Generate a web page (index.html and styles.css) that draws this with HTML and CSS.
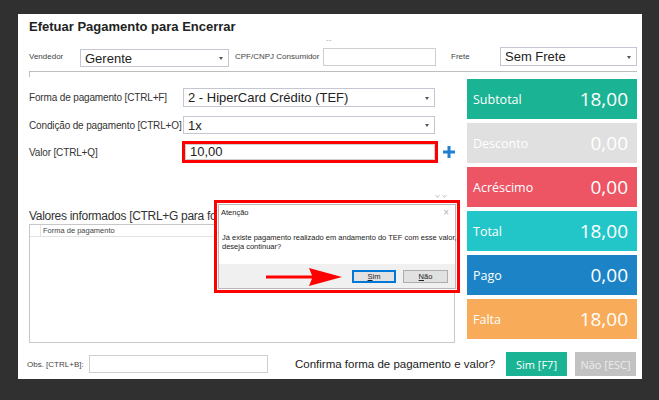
FILE: index.html
```html
<!DOCTYPE html>
<html lang="pt-BR">
<head>
    <meta charset="UTF-8">
    <meta name="viewport" content="width=device-width, initial-scale=1.0">
    <title>Efetuar Pagamento para Encerrar</title>
    <link rel="stylesheet" href="styles.css">
</head>
<body>
    <div class="window">
        <h1 class="title">Efetuar Pagamento para Encerrar</h1>

        <div class="top-row">
            <span class="lbl-sm lbl-vendedor">Vendedor</span>
            <div class="select sel-vendedor">Gerente<span class="caret"></span></div>
            <span class="lbl-sm lbl-cpf">CPF/CNPJ Consumidor</span>
            <div class="cpf-wrap">
                <span class="dashes">--</span>
                <div class="input input-cpf"></div>
            </div>
            <span class="lbl-sm lbl-frete">Frete</span>
            <div class="select sel-frete">Sem Frete<span class="caret"></span></div>
        </div>

        <div class="divider"></div>

        <div class="main">
            <div class="left">
                <div class="form-row r1">
                    <label>Forma de pagamento [CTRL+F]</label>
                    <div class="select sel-wide">2 - HiperCard Crédito (TEF)<span class="caret"></span></div>
                </div>
                <div class="form-row r2">
                    <label>Condição de pagamento [CTRL+O]</label>
                    <div class="select sel-wide">1x<span class="caret"></span></div>
                </div>
                <div class="form-row r3">
                    <label>Valor [CTRL+Q]</label>
                    <div class="input input-valor">10,00</div>
                    <svg class="plus" width="12" height="12" viewBox="0 0 12 12">
                        <path d="M4.5 0h3v4.5H12v3H7.5V12h-3V7.5H0v-3h4.5z" fill="#1f7fd1"/>
                    </svg>
                </div>

                <div class="chevrons">
                    <svg width="12" height="5" viewBox="0 0 12 5">
                        <path d="M0.5 1l2 2.5 2-2.5M7.5 1l2 2.5 2-2.5" fill="none" stroke="#c4c4c4" stroke-width="1"/>
                    </svg>
                </div>
                <!-- the dialog covers the end of this heading -->
                <h2 class="valores">Valores informados [CTRL+G para focar]</h2>
                <div class="table">
                    <div class="thead">
                        <div class="th-first"></div>
                        <div class="th">Forma de pagamento</div>
                    </div>
                </div>
            </div>

            <div class="cards">
                <div class="card subtotal"><span>Subtotal</span><span class="val">18,00</span></div>
                <div class="card desconto"><span>Desconto</span><span class="val">0,00</span></div>
                <div class="card acrescimo"><span>Acréscimo</span><span class="val">0,00</span></div>
                <div class="card total"><span>Total</span><span class="val">18,00</span></div>
                <div class="card pago"><span>Pago</span><span class="val">0,00</span></div>
                <div class="card falta"><span>Falta</span><span class="val">18,00</span></div>
            </div>
        </div>

        <div class="bottom">
            <span class="lbl-sm lbl-obs">Obs. [CTRL+B]:</span>
            <div class="input input-obs"></div>
            <span class="confirm">Confirma forma de pagamento e valor?</span>
            <div class="btn btn-sim">Sim [F7]</div>
            <div class="btn btn-nao">Não [ESC]</div>
        </div>

        <div class="dialog-mark">
            <div class="dialog">
                <div class="dlg-title"><span>Atenção</span><span class="dlg-close">&times;</span></div>
                <div class="dlg-msg">Já existe pagamento realizado em andamento do TEF com esse valor,<br>deseja continuar?</div>
                <div class="dlg-bar">
                    <div class="dlg-btn dlg-sim"><u>S</u>im</div>
                    <div class="dlg-btn dlg-nao"><u>N</u>ão</div>
                </div>
            </div>
            <svg class="arrow" width="76" height="20" viewBox="0 0 76 20">
                <path d="M0 8.5h46l-3-7.5 33 9-33 9 3-7.5H0z" fill="#f00"/>
            </svg>
        </div>
    </div>
</body>
</html>
```

FILE: styles.css
```css
body {
    margin: 0;
    background-color: #303030;
    font-family: "Liberation Sans", Arial, sans-serif;
    color: #333;
}
.window {
    position: relative;
    margin: 14px 0 0 18px;
    width: 624px;
    height: 365px;
    box-sizing: border-box;
    padding: 5px 5px 0 11px;
    background-color: #fff;
}
.title {
    margin: 0;
    font-size: 13px;
    font-weight: bold;
    line-height: 16px;
    color: #222;
}
.top-row {
    display: flex;
    align-items: center;
    height: 19px;
    margin-top: 12px;
}
.lbl-sm {
    font-size: 8px;
    white-space: nowrap;
    color: #444;
}
.lbl-vendedor {
    width: 51px;
}
.lbl-cpf {
    width: 88px;
    margin-left: 6px;
}
.lbl-frete {
    width: 49px;
    margin-left: 15px;
}
.select {
    position: relative;
    display: flex;
    align-items: center;
    box-sizing: border-box;
    padding-left: 4px;
    border: 1px solid #c6c6d2;
    font-size: 13px;
    white-space: nowrap;
    color: #222;
}
.caret {
    position: absolute;
    right: 5px;
    top: 50%;
    margin-top: -1px;
    border-left: 2px solid transparent;
    border-right: 2px solid transparent;
    border-top: 3px solid #555;
}
.sel-vendedor {
    width: 149px;
    height: 18px;
    margin-top: 3px;
}
.sel-frete {
    width: 137px;
    height: 19px;
}
.input {
    box-sizing: border-box;
    border: 1px solid #cfcfcf;
    background-color: #fff;
}
.cpf-wrap {
    position: relative;
}
.dashes {
    position: absolute;
    left: 3px;
    top: -13px;
    font-size: 8px;
    color: #aaa;
}
.input-cpf {
    width: 113px;
    height: 18px;
}
.divider {
    height: 5px;
    margin-top: 5px;
    border-top: 1px solid #bdbdbd;
    border-left: 1px solid #bdbdbd;
}
.main {
    display: flex;
    gap: 12px;
    margin-top: 2px;
}
.left {
    width: 426px;
    padding-top: 9px;
}
.form-row {
    display: flex;
    align-items: center;
}
.form-row label {
    width: 154px;
    flex-shrink: 0;
    font-size: 10px;
    letter-spacing: -0.15px;
    white-space: nowrap;
    color: #333;
}
.r1 {
    height: 19px;
}
.r2 {
    height: 18px;
    margin-top: 9px;
}
.r3 {
    height: 22px;
    margin-top: 7px;
}
.sel-wide {
    width: 252px;
    height: 100%;
}
.input-valor {
    width: 256px;
    height: 22px;
    margin-left: -1px;
    padding-left: 5px;
    border: 3px solid #f00;
    box-shadow: inset 0 0 0 1px #d0d0d0;
    font-size: 13px;
    line-height: 16px;
    color: #222;
}
.plus {
    margin-left: 5px;
}
.chevrons {
    display: flex;
    justify-content: flex-end;
    height: 6px;
    margin-top: 31px;
    padding-right: 8px;
}
.valores {
    width: 185px;
    overflow: hidden;
    margin: 8px 0 0;
    font-size: 12px;
    font-weight: normal;
    letter-spacing: -0.3px;
    line-height: 16px;
    white-space: nowrap;
    color: #333;
}
.table {
    height: 119px;
    box-sizing: border-box;
    border: 1px solid #c8c8c8;
}
.thead {
    display: flex;
    height: 11px;
    border-bottom: 1px solid #e2e2e2;
}
.th-first {
    width: 10px;
    border-right: 1px solid #e2e2e2;
}
.th {
    padding-left: 2px;
    font-size: 7.5px;
    line-height: 11px;
    color: #444;
}
.cards {
    display: flex;
    flex-direction: column;
    gap: 4px;
    width: 170px;
}
.card {
    display: flex;
    align-items: center;
    justify-content: space-between;
    height: 40px;
    padding: 0 9px 0 6px;
    font-family: "Open Sans", sans-serif;
    font-size: 12.5px;
    color: #fff;
}
.card .val {
    font-size: 19px;
}
.subtotal {
    background-color: #1ab394;
}
.desconto {
    background-color: #e0e0e0;
}
.acrescimo {
    background-color: #ed5565;
}
.total {
    background-color: #23c6c8;
}
.pago {
    background-color: #1c84c6;
}
.falta {
    background-color: #f8ac59;
}
.bottom {
    display: flex;
    align-items: center;
    height: 24px;
    margin-top: 9px;
}
.lbl-obs {
    width: 62px;
    margin-left: -2px;
}
.input-obs {
    width: 179px;
    height: 18px;
}
.confirm {
    margin-left: 27px;
    font-size: 11.5px;
    color: #222;
}
.btn {
    display: flex;
    align-items: center;
    justify-content: center;
    width: 61px;
    height: 24px;
    font-family: "Open Sans", sans-serif;
    font-size: 11px;
    color: #fff;
}
.btn-sim {
    margin-left: auto;
    background-color: #1ab394;
}
.btn-nao {
    margin-left: 8px;
    margin-right: 1px;
    background-color: #c2c2c2;
    color: #ececec;
}
.dialog-mark {
    position: absolute;
    left: 196px;
    top: 186px;
    width: 246px;
    height: 93px;
    box-sizing: border-box;
    padding: 1px;
    border: 3px solid #f00;
    background-color: #fff;
}
.dialog {
    display: flex;
    flex-direction: column;
    height: 100%;
    box-sizing: border-box;
    border: 1px solid #b8b8b8;
    font-size: 7.5px;
    color: #222;
}
.dlg-title {
    display: flex;
    justify-content: space-between;
    align-items: center;
    height: 14px;
    padding: 0 6px 0 2px;
}
.dlg-close {
    font-size: 10px;
    color: #b0b0b0;
}
.dlg-msg {
    margin-top: 14px;
    padding-left: 3px;
    line-height: 9px;
    white-space: nowrap;
}
.dlg-bar {
    display: flex;
    justify-content: flex-end;
    align-items: center;
    gap: 7px;
    height: 24px;
    margin-top: auto;
    padding-right: 7px;
    background-color: #f0f0f0;
}
.dlg-btn {
    display: flex;
    align-items: center;
    justify-content: center;
    box-sizing: border-box;
    height: 13px;
    background-color: #e1e1e1;
    border: 1px solid #adadad;
}
.dlg-sim {
    width: 44px;
    border: 1px solid #0078d7;
    box-shadow: inset 0 0 0 1px #0078d7;
}
.dlg-nao {
    width: 45px;
}
.arrow {
    position: absolute;
    left: 49px;
    top: 64px;
}
```
